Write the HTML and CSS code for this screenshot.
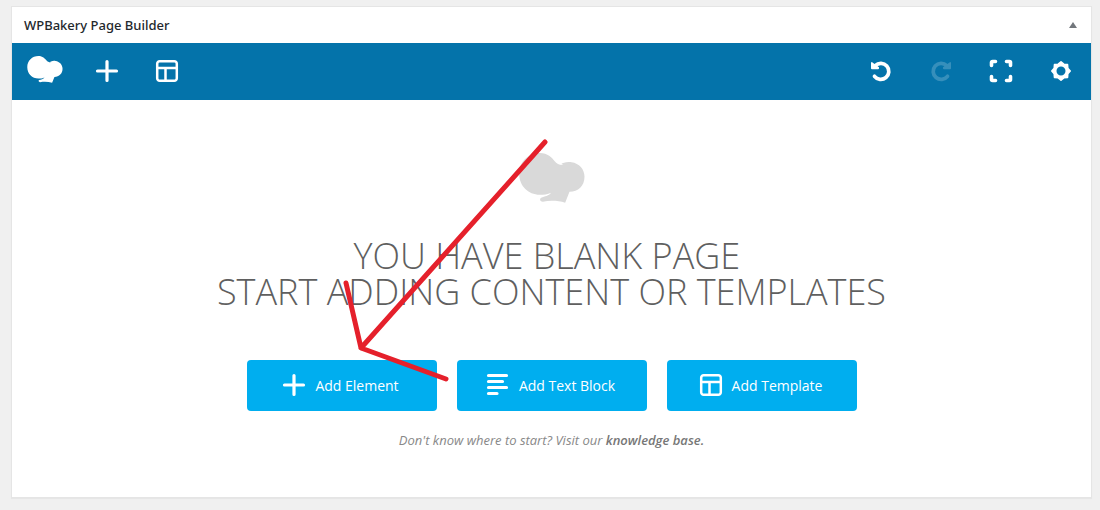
FILE: index.html
```html
<!DOCTYPE html>
<html lang="en">
<head>
<meta charset="utf-8">
<title>WPBakery Page Builder</title>
<link rel="stylesheet" href="styles.css">
</head>
<body>
<svg class="defs" aria-hidden="true">
  <symbol id="logo" viewBox="57 70 197 150"><path d="M119 70C143 70 155 84 163 94C170 102 178 107 190 106C184 105 182 102 189 100C198 97 207 96 214 98C237 101 253 119 253 141C253 168 234 186 208 186L195 219C175 213 150 212 128 216C120 215 117 208 123 204C134 199 146 199 153 189C142 194 130 195 119 195C84 195 57 168 57 132C57 97 84 70 119 70Z"/></symbol>
  <symbol id="plus" viewBox="0 0 24 24"><path d="M12 2.500V21.500M2.500 12H21.500" fill="none" stroke="currentColor" stroke-width="3.200" stroke-linecap="round"/></symbol>
  <symbol id="template" viewBox="0 0 24 24"><path d="M4.700 2.200H19.300A2.500 2.500 0 0 1 21.800 4.700V19.300A2.500 2.500 0 0 1 19.300 21.800H4.700A2.500 2.500 0 0 1 2.200 19.300V4.700A2.500 2.500 0 0 1 4.700 2.200ZM2 9H22M10.500 9V22" fill="none" stroke="currentColor" stroke-width="2.500"/></symbol>
  <symbol id="text" viewBox="0 0 24 24"><path d="M2.500 2.500H20.500M2.500 8.500H16.500M2.500 14.500H20.500M2.500 20.500H11" fill="none" stroke="currentColor" stroke-width="3.200" stroke-linecap="round"/></symbol>
  <symbol id="undo" viewBox="0 0 24 24"><path d="M5.500 17.300A8 8 0 1 0 6.300 6.600" fill="none" stroke="currentColor" stroke-width="3.700" stroke-linecap="round"/><path d="M2 3.600Q2.300 2.700 3.200 3.300L10 8.300V9.300Q10 10.200 9 10.200H3Q2 10.200 2 9.200Z"/></symbol>
  <symbol id="full" viewBox="0 0 24 24"><path d="M2.500 6.500V3.500Q2.500 2.500 3.500 2.500H6.500M17.500 2.500H20.500Q21.500 2.500 21.500 3.500V6.500M21.500 17.500V20.500Q21.500 21.500 20.500 21.500H17.500M6.500 21.500H3.500Q2.500 21.500 2.500 20.500V17.500" fill="none" stroke="currentColor" stroke-width="3.600" stroke-linecap="round"/></symbol>
  <symbol id="gear" viewBox="0 0 24 24"><path fill-rule="evenodd" stroke="currentColor" stroke-width="1.600" stroke-linejoin="round" d="M12 2.800L14.800 5.200L18.500 5.500L18.800 9.200L21.200 12L18.800 14.800L18.500 18.500L14.800 18.800L12 21.200L9.200 18.800L5.500 18.500L5.200 14.800L2.800 12L5.200 9.200L5.500 5.500L9.200 5.200ZM12 6.700A5.300 5.300 0 1 0 12 17.300A5.300 5.300 0 1 0 12 6.700Z"/></symbol>
</svg>
<main class="panel">
  <header class="panel-header">
    <h1 class="panel-title">WPBakery Page Builder</h1>
    <button class="toggle" type="button" aria-label="Toggle panel"><svg class="toggle-icon" viewBox="0 0 8 6"><path d="M4 0L8 6H0Z"/></svg></button>
  </header>
  <nav class="toolbar" aria-label="Builder tools">
    <a class="brand" href="#" aria-label="WPBakery"><svg class="brand-logo"><use href="#logo"/></svg></a>
    <button class="tool" type="button" aria-label="Add element"><svg class="icon"><use href="#plus"/></svg></button>
    <button class="tool" type="button" aria-label="Templates"><svg class="icon"><use href="#template"/></svg></button>
    <span class="spacer"></span>
    <button class="tool" type="button" aria-label="Undo"><svg class="icon"><use href="#undo"/></svg></button>
    <button class="tool" type="button" aria-label="Redo" disabled><svg class="icon icon-flip"><use href="#undo"/></svg></button>
    <button class="tool" type="button" aria-label="Full screen"><svg class="icon"><use href="#full"/></svg></button>
    <button class="tool" type="button" aria-label="Settings"><svg class="icon"><use href="#gear"/></svg></button>
  </nav>
  <section class="welcome">
    <svg class="welcome-logo" aria-hidden="true"><use href="#logo"/></svg>
    <h2 class="headline">You have blank page&nbsp;<br>Start adding content or templates</h2>
    <div class="actions">
      <button class="action" type="button"><svg class="icon"><use href="#plus"/></svg>Add Element</button>
      <button class="action" type="button"><svg class="icon"><use href="#text"/></svg>Add Text Block</button>
      <button class="action" type="button"><svg class="icon"><use href="#template"/></svg>Add Template</button>
    </div>
    <p class="help">Don't know where to start? Visit our <a class="help-link" href="#">knowledge base.</a></p>
    <svg class="arrow" viewBox="340 136 212 248" aria-hidden="true"><path d="M545 142L361 348M346 283L361 348L446 379"/></svg>
  </section>
</main>
</body>
</html>
```
FILE: styles.css
```css
* { box-sizing: border-box; }
body {
  margin: 0;
  padding: 6px 8px 12px 11px;
  background: #f0f0f0;
  font-family: "Open Sans", "Noto Sans", sans-serif;
}
.defs { position: absolute; width: 0; height: 0; }
.panel {
  background: #fff;
  border: 1px solid #e5e5e5;
  box-shadow: 0 1px 1px rgba(0, 0, 0, 0.04);
}
.panel-header {
  display: flex;
  align-items: center;
  justify-content: space-between;
  height: 36px;
  padding: 0 12px;
}
.panel-title { margin: 0; font-family: "Noto Sans", "Open Sans", sans-serif; font-size: 13px; font-weight: 500; line-height: 20px; color: #23282d; }
button { font: inherit; border: 0; padding: 0; cursor: pointer; }
.toggle { display: flex; align-items: center; justify-content: center; width: 12px; height: 20px; background: none; }
.toggle-icon { width: 8px; height: 6px; fill: #72777c; }
.toolbar { display: flex; align-items: center; height: 57px; background: #0473aa; color: #fff; }
.brand { display: flex; align-items: center; justify-content: center; width: 65px; height: 57px; padding-bottom: 4px; color: #fff; }
.brand-logo { width: 36px; height: 27px; fill: currentColor; }
.tool { display: flex; align-items: center; justify-content: center; width: 60px; height: 57px; padding-bottom: 1px; background: none; color: #fff; }
.tool:disabled { opacity: 0.2; cursor: default; }
.icon { width: 24px; height: 24px; flex: none; fill: currentColor; }
.icon-flip { transform: scaleX(-1); }
.spacer { flex: 1; }
.welcome {
  position: relative;
  display: flex;
  flex-direction: column;
  align-items: center;
  padding: 53px 20px 47px;
  text-align: center;
}
.welcome-logo { width: 66px; height: 50px; fill: #d9d9d9; }
.headline {
  margin: 35px 0 50px;
  font-size: 36px;
  line-height: 36px;
  font-weight: 300;
  color: #5f5f5f;
  text-transform: uppercase;
}
.actions { display: flex; flex-wrap: wrap; justify-content: center; gap: 20px; }
.action {
  display: flex;
  align-items: center;
  justify-content: center;
  gap: 9px;
  width: 190px;
  height: 51px;
  padding: 0 2px 1px 0;
  border-radius: 4px;
  background: #00aeef;
  color: #fff;
  font-size: 14px;
}
.help { margin: 19px 0 0; font-size: 13px; line-height: 20px; font-style: italic; color: #888; }
.help-link { color: #777; font-weight: 600; text-decoration: none; }
.arrow {
  position: absolute;
  top: 36px;
  left: calc(50% - 212px);
  width: 212px;
  height: 248px;
  fill: none;
  stroke: #e5202b;
  stroke-width: 5;
  stroke-linecap: round;
  stroke-linejoin: round;
  pointer-events: none;
}
```
